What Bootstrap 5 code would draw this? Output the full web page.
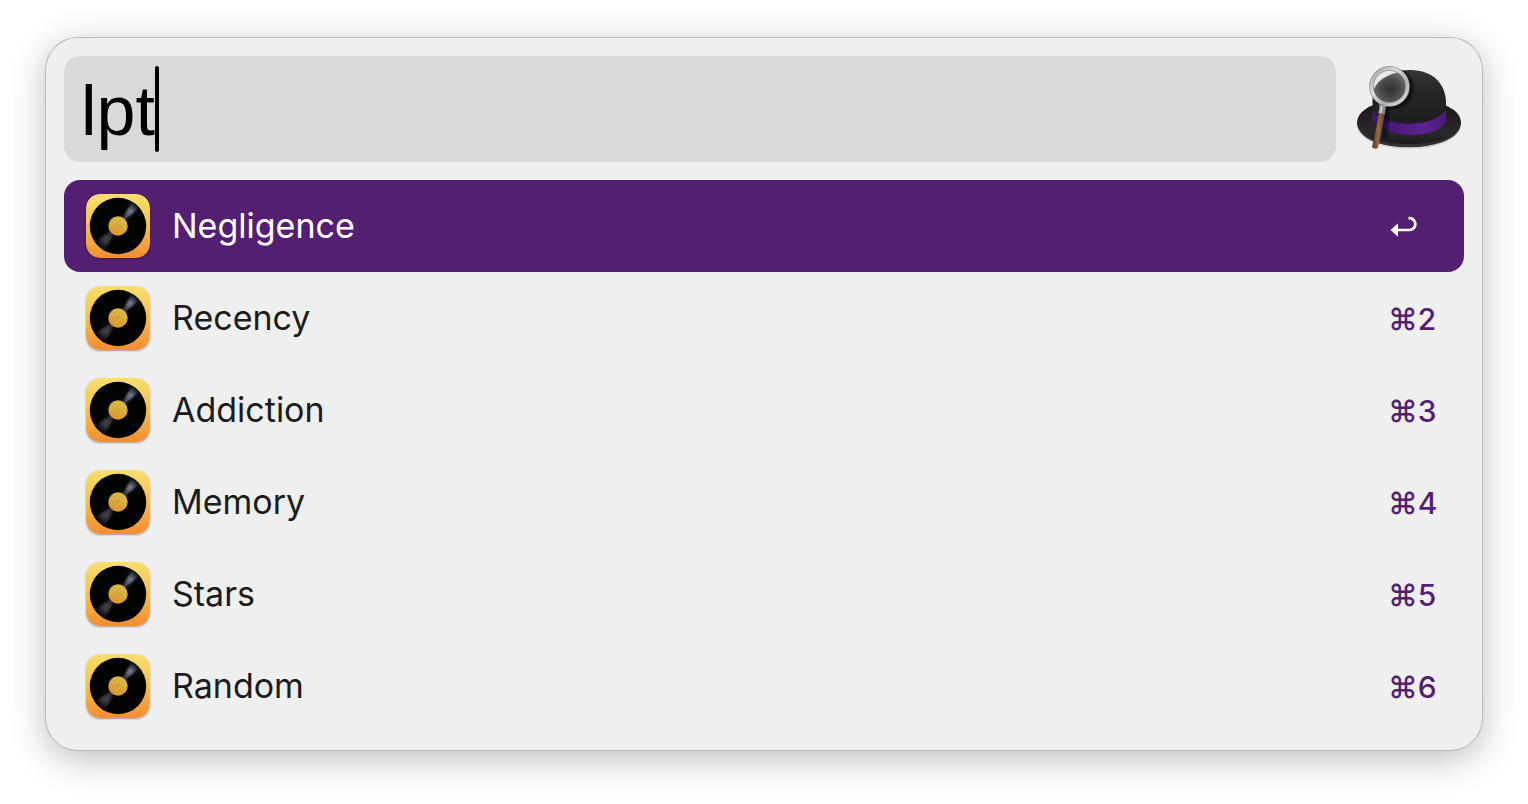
<!DOCTYPE html>
<html lang="en">
<head>
<meta charset="utf-8">
<meta name="viewport" content="width=device-width, initial-scale=1">
<title>Launcher</title>
<link href="https://cdn.jsdelivr.net/npm/bootstrap@5.3.0/dist/css/bootstrap.min.css" rel="stylesheet">
<style>
  body { font-family: Inter, "Liberation Sans", sans-serif; background: #fff; }
  .launcher {
    margin: 38px 46px 54px; padding: 18px; border-radius: 32px; background: #efefef;
    box-shadow: 0 0 0 1px #b9b9b9, 0 8px 36px rgba(0,0,0,.28);
  }
  .search-field { height: 106px; }
  .search-field .form-control, .search-field .form-control:focus {
    height: 100%; padding: 4px 17px 0; border: 0; border-radius: 16px; box-shadow: none;
    background: #d9d9d9; color: #000; font-family: "Liberation Sans", sans-serif; font-size: 70px; line-height: 102px;
  }
  .caret { position: absolute; left: 91px; top: 10px; bottom: 10px; width: 4px; border-radius: 2px; background: #000; }
  .hat { width: 128px; height: 106px; }
  .results { margin-top: 18px; }
  .results .list-group-item {
    height: 92px; padding: 0 28px 0 22px; gap: 22px; border: 0; border-radius: 16px;
    background: transparent; color: #1b1b1b; font-size: 34px; line-height: 44px;
  }
  .results .list-group-item.active { margin: 0; background: #541f71; color: #fff; }
  .record { width: 64px; height: 64px; border-radius: 14px; box-shadow: 0 1px 2px rgba(0,0,0,.35); }
  .shortcut { width: 48px; padding-top: 2px; font-size: 30px; font-weight: 500; color: #541f71; text-align: left; white-space: nowrap; }
  .active .shortcut { color: #fff; }
</style>
</head>
<body>
<svg width="0" height="0" class="position-absolute" aria-hidden="true">
  <defs>
    <linearGradient id="tile" x2="0" y2="1"><stop stop-color="#f7df70"/><stop offset=".5" stop-color="#f6bf4b"/><stop offset="1" stop-color="#f08d33"/></linearGradient>
    <linearGradient id="label" x1=".7" y1="0" x2=".3" y2="1"><stop stop-color="#d9bd48"/><stop offset="1" stop-color="#db942f"/></linearGradient>
    <radialGradient id="shine" gradientUnits="userSpaceOnUse" cx="32" cy="32" r="28"><stop offset=".35" stop-color="#383a46"/><stop offset=".68" stop-color="#80839a"/><stop offset="1" stop-color="#101118"/></radialGradient>
    <radialGradient id="shineLow" gradientUnits="userSpaceOnUse" cx="32" cy="32" r="28"><stop offset=".35" stop-color="#2c2e37"/><stop offset=".65" stop-color="#41444c"/><stop offset="1" stop-color="#08080a"/></radialGradient>
    <filter id="soft" x="-30%" y="-30%" width="160%" height="160%"><feGaussianBlur stdDeviation="1"/></filter>
    <clipPath id="disc"><circle cx="32" cy="32" r="28"/></clipPath>
    <symbol id="vinyl" viewBox="0 0 64 64">
      <rect width="64" height="64" rx="14" fill="url(#tile)"/>
      <circle cx="32" cy="32" r="28.2" fill="#030406"/>
      <g clip-path="url(#disc)">
        <path d="M32 32L46 8L53 14Z" fill="url(#shine)" filter="url(#soft)"/>
        <path d="M32 32L10 47L19 56Z" fill="url(#shineLow)" filter="url(#soft)"/>
      </g>
      <g fill="none" stroke="#000" stroke-opacity=".3" stroke-width=".6"><circle cx="32" cy="32" r="14"/><circle cx="32" cy="32" r="18"/><circle cx="32" cy="32" r="22"/><circle cx="32" cy="32" r="25"/></g>
      <circle cx="32" cy="32" r="9.7" fill="url(#label)"/>
      <circle cx="32" cy="31.500" r=".8" fill="#a9792c"/>
    </symbol>
  </defs>
</svg>

<main class="launcher">
  <div class="d-flex">
    <div class="search-field position-relative flex-grow-1">
      <input class="form-control" type="text" value="lpt" aria-label="Search" autocomplete="off" spellcheck="false">
      <span class="caret"></span>
    </div>
    <svg class="hat flex-shrink-0" viewBox="0 0 128 106" role="img" aria-label="Bowler hat with magnifying glass">
      <defs>
        <linearGradient id="crown" x2="0" y2="1"><stop stop-color="#363435"/><stop offset=".35" stop-color="#272526"/><stop offset="1" stop-color="#1c1a1b"/></linearGradient>
        <linearGradient id="brim" x2="0" y2="1"><stop stop-color="#1b191a"/><stop offset=".65" stop-color="#2b292a"/><stop offset="1" stop-color="#171516"/></linearGradient>
        <linearGradient id="band"><stop stop-color="#43176c"/><stop offset=".25" stop-color="#4b197a"/><stop offset=".7" stop-color="#5d228f"/><stop offset="1" stop-color="#4b1b78"/></linearGradient>
        <linearGradient id="rim" x1="0" y1="0" x2="1" y2="1"><stop stop-color="#9b9d9e"/><stop offset=".35" stop-color="#dcdddd"/><stop offset=".65" stop-color="#b3b5b6"/><stop offset="1" stop-color="#dcdddd"/></linearGradient>
        <linearGradient id="wood"><stop stop-color="#59371f"/><stop offset=".5" stop-color="#94694a"/><stop offset="1" stop-color="#64401f"/></linearGradient>
        <radialGradient id="lens" cx=".48" cy=".5" r=".55"><stop stop-color="#303030"/><stop offset=".45" stop-color="#494949"/><stop offset="1" stop-color="#858585"/></radialGradient>
        <clipPath id="glass"><circle cx="53.500" cy="30.500" r="17"/></clipPath>
        <clipPath id="hatShape"><path d="M36 62C36 32 46 14 75 14C98 14 110 30 110 48V78C90 90 56 90 36 78Z"/></clipPath>
      </defs>
      <ellipse cx="73" cy="69" rx="51" ry="23" fill="#000" opacity=".3" filter="url(#soft)"/>
      <path d="M21 67C21 59 28 52 38 49H108C119 53 125 59 125 67C125 80 102 91 73 91S21 80 21 67Z" fill="url(#brim)"/>
      <path d="M22 71C28 82 47 88 73 88S118 82 124 71C121 83 101 91 73 91S26 84 22 71Z" fill="#333132"/>
      <path d="M36.500 66V44C38 27 50 14 74 14C98 14 110 29 110 47V68C98 82 51 82 36.500 66Z" fill="url(#crown)"/>
      <path d="M36.500 53C45 72 98 73 110 54V67C98 83 51 84 36.500 64Z" fill="url(#band)"/>
      <g clip-path="url(#hatShape)">
        <circle cx="56.500" cy="32" r="19" fill="none" stroke="#000" stroke-opacity=".6" stroke-width="4" filter="url(#soft)"/>
        <path d="M52 51L48 82" stroke="#09030e" stroke-opacity=".5" stroke-width="6" filter="url(#soft)"/>
      </g>
      <g clip-path="url(#glass)">
        <circle cx="53.500" cy="30.500" r="17" fill="#e7e7e7"/>
        <path d="M35 42C38 25 50 17 75 14V52H35Z" fill="url(#lens)"/>
      </g>
      <path d="M43.500 56L49 57L42 92Q39 93.500 36 91.500Z" fill="url(#wood)"/>
      <path d="M43 48L50 50L48.500 58.500L42 57L43 53Z" fill="#85888a"/><path d="M46 50L44.500 57" stroke="#d0d0d0" stroke-width="2"/>
      <circle cx="53.500" cy="30.500" r="18" fill="none" stroke="#77797a" stroke-width="4.500"/>
      <circle cx="53.500" cy="30.500" r="18" fill="none" stroke="url(#rim)" stroke-width="3.400"/>
    </svg>
  </div>

  <div class="results list-group">
    <button type="button" class="list-group-item list-group-item-action active d-flex align-items-center">
      <svg class="record flex-shrink-0" aria-hidden="true"><use href="#vinyl"/></svg>
      <span class="flex-grow-1">Negligence</span>
      <span class="shortcut d-flex"><svg width="30" height="22" viewBox="0 0 30 22" role="img" aria-label="Return"><path d="M9 14H21.500A5.800 5.800 0 0 0 21.500 2.200H20.500" fill="none" stroke="currentColor" stroke-width="2.700"/><path d="M2.500 14L10 7.200V20.800Z" fill="currentColor"/></svg></span>
    </button>
    <button type="button" class="list-group-item list-group-item-action d-flex align-items-center">
      <svg class="record flex-shrink-0" aria-hidden="true"><use href="#vinyl"/></svg>
      <span class="flex-grow-1">Recency</span>
      <span class="shortcut">⌘2</span>
    </button>
    <button type="button" class="list-group-item list-group-item-action d-flex align-items-center">
      <svg class="record flex-shrink-0" aria-hidden="true"><use href="#vinyl"/></svg>
      <span class="flex-grow-1">Addiction</span>
      <span class="shortcut">⌘3</span>
    </button>
    <button type="button" class="list-group-item list-group-item-action d-flex align-items-center">
      <svg class="record flex-shrink-0" aria-hidden="true"><use href="#vinyl"/></svg>
      <span class="flex-grow-1">Memory</span>
      <span class="shortcut">⌘4</span>
    </button>
    <button type="button" class="list-group-item list-group-item-action d-flex align-items-center">
      <svg class="record flex-shrink-0" aria-hidden="true"><use href="#vinyl"/></svg>
      <span class="flex-grow-1">Stars</span>
      <span class="shortcut">⌘5</span>
    </button>
    <button type="button" class="list-group-item list-group-item-action d-flex align-items-center">
      <svg class="record flex-shrink-0" aria-hidden="true"><use href="#vinyl"/></svg>
      <span class="flex-grow-1">Random</span>
      <span class="shortcut">⌘6</span>
    </button>
  </div>
</main>
<script src="https://cdn.jsdelivr.net/npm/bootstrap@5.3.0/dist/js/bootstrap.bundle.min.js"></script>
</body>
</html>
